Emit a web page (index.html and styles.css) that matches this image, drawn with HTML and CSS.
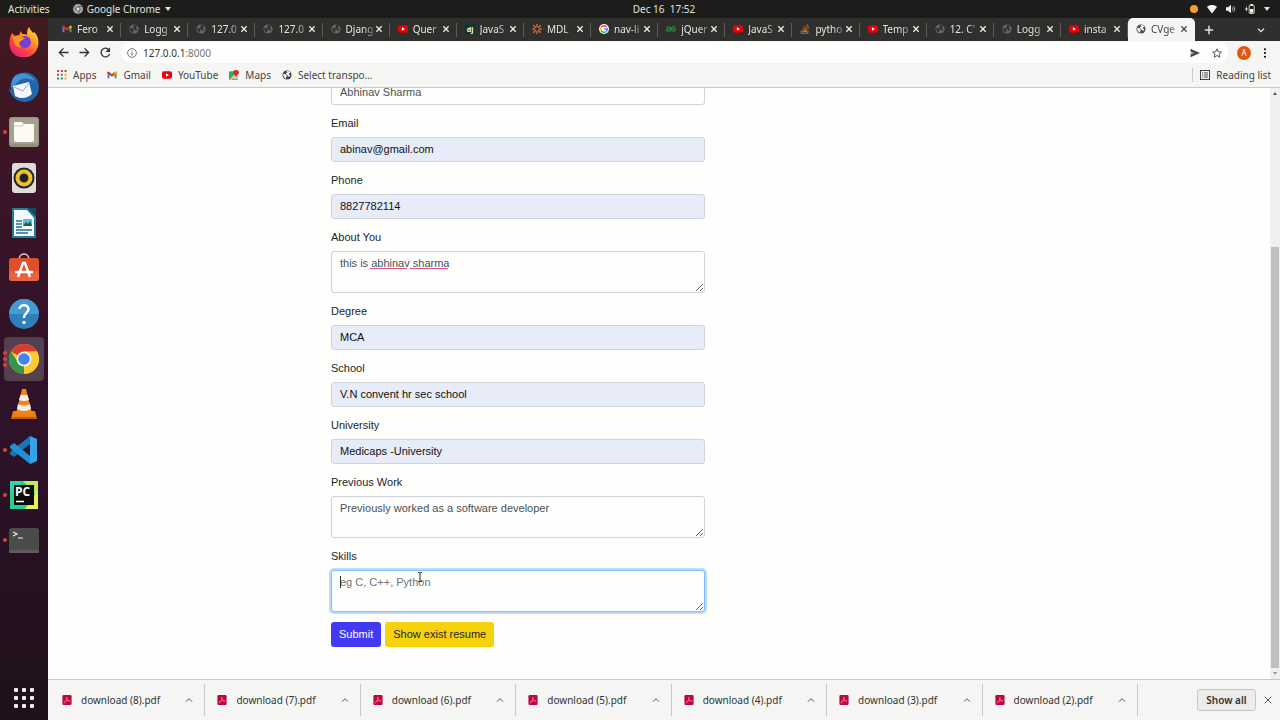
FILE: index.html
```html
<!DOCTYPE html>
<html lang="en">
<head>
    <meta charset="utf-8">
    <title>CVgenerator</title>
    <link rel="stylesheet" href="styles.css">
</head>
<body>
    <!-- Shared icons -->
    <svg class="sprite" aria-hidden="true">
        <symbol id="globe" viewBox="0 0 24 24">
            <circle cx="12" cy="12" r="11" fill="currentColor"/>
            <path d="M3 9l5 1 4 4-2 3v4c-4-1-7-5-7-9zM11 3c3-1 7 0 9 4l-3 1-1 3 4 1-2 4-4-1-1-3-4-2 1-3 3-1z" class="land"/>
        </symbol>
        <symbol id="youtube" viewBox="0 0 24 24">
            <rect x="0" y="3" width="24" height="18" rx="5" fill="#e80008"/>
            <path d="M9.500 8l7 4-7 4z" fill="#fff"/>
        </symbol>
        <symbol id="gmail" viewBox="0 0 24 24">
            <path d="M1 5v15h5V9z" fill="#4285f4"/>
            <path d="M23 5v15h-5V9z" fill="#34a853"/>
            <path d="M1 4h4l7 6 7-6h4v4l-11 8L1 8z" fill="#d93025"/>
            <path d="M18 5l5-1v4l-5 4z" fill="#fbbc04"/>
        </symbol>
        <symbol id="close" viewBox="0 0 24 24">
            <path d="M4 4l16 16M20 4L4 20" stroke="currentColor" stroke-width="4" fill="none"/>
        </symbol>
        <symbol id="up" viewBox="0 0 24 24">
            <path d="M3 17l9-9 9 9" stroke="currentColor" stroke-width="3" fill="none"/>
        </symbol>
        <symbol id="pdf" viewBox="0 0 24 24">
            <rect x="1" y="0" width="22" height="24" rx="3" fill="#c00642"/>
            <path d="M12 5c-2 0 0 6 2 8s5 3 5 1-7-1-11 1-4 4-2 4 6-8 6-14z" fill="none" stroke="#ff86a8" stroke-width="1.500"/>
        </symbol>
    </svg>

    <header class="topbar">
        <button class="topbar-item">Activities</button>
        <button class="topbar-item app-menu">
            <svg class="icon-10" viewBox="0 0 24 24"><circle cx="12" cy="12" r="12" fill="#a9a9a6"/><path d="M12 6h11M7 15L2 6M17 15l-5 9" stroke="#555" stroke-width="2"/><circle cx="12" cy="12" r="5" fill="#ddd" stroke="#555" stroke-width="2"/></svg>
            Google Chrome
            <span class="triangle"></span>
        </button>
        <span class="clock">Dec 16&nbsp; 17:52</span>
        <div class="status">
            <span class="dot"></span>
            <svg class="icon-10" viewBox="0 0 24 24"><path d="M0 7c7-6 17-6 24 0L12 23z" fill="#f2f2f0"/></svg>
            <svg class="icon-10" viewBox="0 0 24 24"><path d="M0 8h5l7-6v20l-7-6H0z" fill="#f2f2f0"/><path d="M15 8c2 2 2 6 0 8M18 5c4 4 4 10 0 14" stroke="#ccc" stroke-width="2" fill="none"/></svg>
            <svg class="icon-10" viewBox="0 0 24 24"><path d="M4 5L0 13h3l-1 7 5-9H4z" fill="#f2f2f0"/><rect x="10" y="3" width="12" height="20" rx="2" fill="none" stroke="#f2f2f0" stroke-width="2"/><path d="M13 0h6v4h-6zM12 12h8v9h-8z" fill="#f2f2f0"/></svg>
            <span class="triangle"></span>
        </div>
    </header>

    <div class="desktop">
        <nav class="dock" aria-label="Dock">
            <ul>
                <li><svg viewBox="0 0 30 30">
                    <defs><linearGradient id="fire" x1="1" y1="0" x2="0.300" y2="1"><stop offset="0" stop-color="#fff04a"/><stop offset="0.400" stop-color="#ff9a20"/><stop offset="0.750" stop-color="#ff4040"/><stop offset="1" stop-color="#e0208a"/></linearGradient></defs>
                    <path d="M3 6l3 3 4-1 2-4 1 3c3 0 4 0 5 1 0-3 0-5 2-8 1 3 3 4 4 6l1-1c5 4 6 13 2 19-6 9-19 8-24 1C-1 19 0 11 3 6z" fill="url(#fire)"/>
                    <circle cx="16" cy="15" r="6" fill="#7a3fd0"/>
                    <path d="M4 10c3-2 6-1 8 0l4 1-4 3c-3 1-2 5 1 6-6 2-9-5-9-10z" fill="#ff9422"/>
                </svg></li>
                <li><svg viewBox="0 0 30 30">
                    <path d="M5 5c5-5 13-6 19-2 6 4 7 12 5 18-2 5-8 9-13 9C8 30 1 24 0 16l2 2c-1-5 0-9 3-13z" fill="#1e67ad"/>
                    <path d="M7 3c8-4 16 0 19 6l-5-2c-5-2-10 0-13 4L2 16C2 11 3 6 7 3z" fill="#3f93d6"/>
                    <path d="M4 14l16-4 3 12c-5 5-12 5-17 2z" fill="#f5f5fa"/>
                    <path d="M5 15l9 4 6-8" fill="none" stroke="#9aa9c4"/>
                </svg></li>
                <li class="running"><svg viewBox="0 0 30 30">
                    <rect width="30" height="30" rx="3" fill="#94907f"/><rect x="1" y="1" width="28" height="26" rx="3" fill="#a5a191"/>
                    <path d="M5 6q0-1 1-1h7l2 2h9q1 0 1 1v15q0 2-2 2H7q-2 0-2-2z" fill="#fbfaf4"/><path d="M5 9h8l2-2" fill="none" stroke="#ccc8b9"/>
                </svg></li>
                <li><svg viewBox="0 0 30 30">
                    <rect x="3" width="24" height="30" rx="3" fill="#dedbd8"/>
                    <circle cx="15" cy="15" r="10.500" fill="#252525"/><circle cx="15" cy="15" r="6.500" fill="none" stroke="#edc033" stroke-width="4"/><circle cx="15" cy="15" r="3" fill="#222"/>
                </svg></li>
                <li><svg viewBox="0 0 30 30">
                    <path d="M4 0h15l8 8v21q0 1-1 1H4q-1 0-1-1V1q0-1 1-1z" fill="#247f9f"/><path d="M5 2h13l7 8v18H5z" fill="#f5fafa"/><path d="M18 0h9v9z" fill="#114a63"/>
                    <path d="M7 13h6M7 16h6M7 19h6M7 22h16M7 25h12" stroke="#23708e" stroke-width="1.500"/><rect x="14" y="11" width="9" height="7" fill="#5abde0"/><path d="M14 18l3-4 2 2 2-3 2 5z" fill="#245e3c"/>
                </svg></li>
                <li><svg viewBox="0 0 30 30">
                    <path d="M10 7c0-8 10-8 10 0" fill="none" stroke="#f0cfc4" stroke-width="1.500"/><rect y="5" width="30" height="23" rx="3" fill="#df5029"/><path d="M0 18h30v7q0 3-3 3H3q-3 0-3-3z" fill="#e9643c"/>
                    <path d="M9 24l5-14h2l5 14M6 19h18" fill="none" stroke="#fff" stroke-width="2.500"/>
                </svg></li>
                <li><svg viewBox="0 0 30 30">
                    <circle cx="15" cy="15" r="15" fill="#2f7fba"/><path d="M0 15a15 15 0 0 1 30 0z" fill="#449bd3"/>
                    <path d="M10.500 10c0-5 9-5 9 0 0 4-4.500 4-4.500 9" fill="none" stroke="#fff" stroke-width="2.500"/><circle cx="15" cy="23.500" r="1.800" fill="#fff"/>
                </svg></li>
                <li class="running many active"><svg viewBox="0 0 30 30">
                    <circle cx="15" cy="15" r="15" fill="#fbc934"/>
                    <path d="M15 15L2 7.500a15 15 0 0 1 26 0H15z" fill="#d93b2f"/><path d="M15 15v15A15 15 0 0 1 2 7.500l7 11z" fill="#35954a"/><path d="M28 7.500A15 15 0 0 1 15 30l6.500-12V7.500z" fill="#fbc934"/>
                    <circle cx="15" cy="15" r="7.500" fill="#f4f4f4"/><circle cx="15" cy="15" r="5.800" fill="#4385e8"/>
                </svg></li>
                <li><svg viewBox="0 0 30 30">
                    <path d="M4 22h22l2 8H2z" fill="#ee7d13"/><path d="M13 0h4l6 24q-8 4-16 0z" fill="#f08519"/>
                    <path d="M11.500 6h7l1.500 5q-5 2-10 0zM9 15q6 3 12 0l1 5q-7 4-14 0z" fill="#f2eee9"/><path d="M2 28h26v2H2z" fill="#c45b08"/>
                </svg></li>
                <li class="running"><svg viewBox="0 0 30 30">
                    <path d="M21 1l7 3v22l-7 3z" fill="#33a5e6"/><path d="M21 1v8L5 22l-4-3v-2z" fill="#1875b5"/><path d="M21 29v-8L5 8l-4 3v2z" fill="#2291d5"/>
                </svg></li>
                <li class="running"><svg viewBox="0 0 30 30">
                    <rect x="1" y="1" width="28" height="28" fill="#27cd8e"/><path d="M14 1h15v16z" fill="#b8ec5c"/><path d="M29 10v19H16z" fill="#e9f05b"/><path d="M1 1h12L1 14z" fill="#32d5a6"/>
                    <rect x="5" y="5" width="20" height="20" fill="#0c0c0c"/>
                    <text x="6" y="16" class="pc-text">PC</text><path d="M7 21.500h8" stroke="#fff" stroke-width="1.500"/>
                </svg></li>
                <li class="running"><svg viewBox="0 0 30 30">
                    <rect y="3" width="30" height="25" rx="3" fill="#4b4c4a"/><rect y="25" width="30" height="3" rx="1" fill="#5c5d5a"/>
                    <path d="M4 7l4 2-4 2M9 13h5" fill="none" stroke="#f0f0f0" stroke-width="1.200"/>
                </svg></li>
            </ul>
            <button class="show-apps" aria-label="Show applications">
                <i></i><i></i><i></i><i></i><i></i><i></i><i></i><i></i><i></i>
            </button>
        </nav>

        <div class="browser">
            <div class="tabstrip">
                <div class="tabs">
                    <div class="tab"><svg><use href="#gmail"/></svg><span>Fero</span><button aria-label="Close"><svg><use href="#close"/></svg></button></div>
                    <div class="tab"><svg><use href="#globe"/></svg><span>Logg</span><button aria-label="Close"><svg><use href="#close"/></svg></button></div>
                    <div class="tab"><svg><use href="#globe"/></svg><span>127.0</span><button aria-label="Close"><svg><use href="#close"/></svg></button></div>
                    <div class="tab"><svg><use href="#globe"/></svg><span>127.0</span><button aria-label="Close"><svg><use href="#close"/></svg></button></div>
                    <div class="tab"><svg><use href="#globe"/></svg><span>Djang</span><button aria-label="Close"><svg><use href="#close"/></svg></button></div>
                    <div class="tab"><svg><use href="#youtube"/></svg><span>Quer</span><button aria-label="Close"><svg><use href="#close"/></svg></button></div>
                    <div class="tab"><svg viewBox="0 0 24 24"><rect width="24" height="24" rx="3" fill="#0b3b2b"/><text x="4" y="18" class="dj-text">dj</text></svg><span>JavaS</span><button aria-label="Close"><svg><use href="#close"/></svg></button></div>
                    <div class="tab"><svg viewBox="0 0 24 24"><path d="M12 0v8M12 16v8M0 12h8M16 12h8M3 3l6 6M15 15l6 6M21 3l-6 6M9 15l-6 6" stroke="#e0782a" stroke-width="3"/></svg><span>MDL</span><button aria-label="Close"><svg><use href="#close"/></svg></button></div>
                    <div class="tab"><svg viewBox="0 0 24 24"><circle cx="12" cy="12" r="12" fill="#fff"/><g fill="none" stroke-width="3.500"><path d="M18 7a8 8 0 0 0-13 1" stroke="#ea4335"/><path d="M5 8a8 8 0 0 0 0 8" stroke="#fbbc05"/><path d="M5 16a8 8 0 0 0 12 2" stroke="#34a853"/><path d="M17 18a8 8 0 0 0 3-6h-8" stroke="#4285f4"/></g></svg><span>nav-li</span><button aria-label="Close"><svg><use href="#close"/></svg></button></div>
                    <div class="tab"><svg viewBox="0 0 24 24"><path d="M2 8c5-4 9 0 9 4H1c0 6 7 7 10 3V8M22 8c-5-4-9 0-9 4h10c0 6-7 7-10 3" fill="none" stroke="#2f8d46" stroke-width="2.500"/></svg><span>jQuer</span><button aria-label="Close"><svg><use href="#close"/></svg></button></div>
                    <div class="tab"><svg><use href="#youtube"/></svg><span>JavaS</span><button aria-label="Close"><svg><use href="#close"/></svg></button></div>
                    <div class="tab"><svg viewBox="0 0 24 24"><path d="M3 15v7h16v-7" fill="none" stroke="#999" stroke-width="2"/><path d="M6 18h10M6 14l10 2M7 9l9 5M11 5l7 7M16 1l5 9" stroke="#e87922" stroke-width="2.200"/></svg><span>pytho</span><button aria-label="Close"><svg><use href="#close"/></svg></button></div>
                    <div class="tab"><svg><use href="#youtube"/></svg><span>Temp</span><button aria-label="Close"><svg><use href="#close"/></svg></button></div>
                    <div class="tab"><svg><use href="#globe"/></svg><span>12. C'</span><button aria-label="Close"><svg><use href="#close"/></svg></button></div>
                    <div class="tab"><svg><use href="#globe"/></svg><span>Logg</span><button aria-label="Close"><svg><use href="#close"/></svg></button></div>
                    <div class="tab"><svg><use href="#youtube"/></svg><span>insta</span><button aria-label="Close"><svg><use href="#close"/></svg></button></div>
                    <div class="tab current"><svg><use href="#globe"/></svg><span>CVge</span><button aria-label="Close"><svg><use href="#close"/></svg></button></div>
                </div>
                <div class="tab-actions">
                    <button aria-label="New tab"><svg class="icon-10" viewBox="0 0 24 24"><path d="M12 2v20M2 12h20" stroke="currentColor" stroke-width="3.500"/></svg></button>
                    <button aria-label="Search tabs"><svg class="icon-8" viewBox="0 0 24 24"><path d="M3 8l9 9 9-9" stroke="currentColor" stroke-width="4" fill="none"/></svg></button>
                </div>
            </div>

            <div class="toolbar">
                <button aria-label="Back"><svg class="icon-11" viewBox="0 0 24 24"><path d="M23 12H3M12 3l-9 9 9 9" stroke="currentColor" stroke-width="3" fill="none"/></svg></button>
                <button aria-label="Forward"><svg class="icon-11" viewBox="0 0 24 24"><path d="M1 12h20M12 3l9 9-9 9" stroke="currentColor" stroke-width="3" fill="none"/></svg></button>
                <button aria-label="Reload"><svg class="icon-11" viewBox="0 0 24 24"><path d="M20 7a9.500 9.500 0 1 0 1 8" stroke="currentColor" stroke-width="3" fill="none"/><path d="M22 1v10H12z" fill="currentColor"/></svg></button>
                <div class="address">
                    <svg class="icon-10" viewBox="0 0 24 24"><circle cx="12" cy="12" r="10.500" fill="none" stroke="#5c5f5e" stroke-width="2"/><path d="M12 10v8M12 6v2" stroke="#5c5f5e" stroke-width="2.500"/></svg>
                    <span class="url">127.0.0.1<em>:8000</em></span>
                    <button aria-label="Share"><svg class="icon-10" viewBox="0 0 24 24"><path d="M1 2l23 10L1 22l1-8 9-2-9-2z" fill="#444746"/></svg></button>
                    <button aria-label="Bookmark"><svg class="icon-10" viewBox="0 0 24 24"><path d="M12 2l3 7 7.500.700-5.700 5 1.800 7.300-6.600-4-6.600 4 1.800-7.300-5.700-5L9 9z" fill="none" stroke="#444746" stroke-width="2.200"/></svg></button>
                </div>
                <button class="avatar" aria-label="Profile">A</button>
                <button class="more" aria-label="Menu"><svg class="icon-10" viewBox="0 0 24 24"><circle cx="12" cy="3" r="2.500"/><circle cx="12" cy="12" r="2.500"/><circle cx="12" cy="21" r="2.500"/></svg></button>
            </div>

            <div class="bookmarks">
                <a href="#"><svg viewBox="0 0 24 24"><path d="M0 0h5v5H0zM9 0h5v5H9zM18 0h5v5h-5zM0 9h5v5H0z" fill="#d8432f"/><path d="M9 9h5v5H9z" fill="#4285f4"/><path d="M18 9h5v5h-5zM18 18h5v5h-5z" fill="#e7ae26"/><path d="M0 18h5v5H0zM9 18h5v5H9z" fill="#2b9750"/></svg>Apps</a>
                <a href="#"><svg><use href="#gmail"/></svg>Gmail</a>
                <a href="#"><svg><use href="#youtube"/></svg>YouTube</a>
                <a href="#"><svg viewBox="0 0 24 24"><rect x="0" y="3" width="21" height="21" rx="3" fill="#38a853"/><path d="M2 22L18 5l3 3v14z" fill="#b9cfe8"/><path d="M2 24L13 12l3 3-10 9z" fill="#f2c445"/><path d="M17 0c8 0 9 8 4 11l-4 6-4-6c-5-3-4-11 4-11z" fill="#cf2d2b"/></svg>Maps</a>
                <a href="#"><svg><use href="#globe"/></svg>Select transpo…</a>
                <a href="#" class="reading"><svg viewBox="0 0 24 24"><rect x="1" y="1" width="22" height="22" fill="none" stroke="#333" stroke-width="2.500"/><path d="M5 7h3M10 7h9M5 12h3M10 12h9M5 17h3M10 17h9" stroke="#333" stroke-width="2.200"/></svg>Reading list</a>
            </div>

            <div class="viewport">
                <main class="page">
                    <div class="container">
                        <form class="cv-form">
                            <input type="text" value="Abhinav Sharma" aria-label="Name">

                            <label for="email">Email</label>
                            <input type="text" id="email" class="filled" value="abinav@gmail.com">

                            <label for="phone">Phone</label>
                            <input type="text" id="phone" class="filled" value="8827782114">

                            <label for="about">About You</label>
                            <div class="field">
                                <textarea id="about" spellcheck="false">this is abhinav sharma</textarea>
                                <span class="misspelt first-word"></span>
                                <span class="misspelt second-word"></span>
                            </div>

                            <label for="degree">Degree</label>
                            <input type="text" id="degree" class="filled" value="MCA">

                            <label for="school">School</label>
                            <input type="text" id="school" class="filled" value="V.N convent hr sec school">

                            <label for="university">University</label>
                            <input type="text" id="university" class="filled" value="Medicaps -University">

                            <label for="work">Previous Work</label>
                            <textarea id="work" spellcheck="false">Previously worked as a software developer</textarea>

                            <label for="skills">Skills</label>
                            <div class="field">
                                <textarea id="skills" class="focused" placeholder="eg C, C++, Python"></textarea>
                                <span class="caret"></span>
                                <svg class="pointer" viewBox="0 0 6 10"><path d="M1 .500h1.500l.500.500.500-.500H5M3 1v8M1 9.500h1.500l.500-.500.500.500H5" fill="none" stroke="#333"/></svg>
                            </div>

                            <div class="buttons">
                                <button type="button" class="btn btn-primary">Submit</button>
                                <button type="button" class="btn btn-warning">Show exist resume</button>
                            </div>
                        </form>
                    </div>
                </main>
                <div class="scrollbar">
                    <span class="arrow arrow-up"></span>
                    <div class="track"><div class="thumb"></div></div>
                    <span class="arrow arrow-down"></span>
                </div>
            </div>

            <footer class="downloads">
                <div class="files">
                    <div class="file"><svg><use href="#pdf"/></svg><span>download (8).pdf</span><button aria-label="Options"><svg><use href="#up"/></svg></button></div>
                    <div class="file"><svg><use href="#pdf"/></svg><span>download (7).pdf</span><button aria-label="Options"><svg><use href="#up"/></svg></button></div>
                    <div class="file"><svg><use href="#pdf"/></svg><span>download (6).pdf</span><button aria-label="Options"><svg><use href="#up"/></svg></button></div>
                    <div class="file"><svg><use href="#pdf"/></svg><span>download (5).pdf</span><button aria-label="Options"><svg><use href="#up"/></svg></button></div>
                    <div class="file"><svg><use href="#pdf"/></svg><span>download (4).pdf</span><button aria-label="Options"><svg><use href="#up"/></svg></button></div>
                    <div class="file"><svg><use href="#pdf"/></svg><span>download (3).pdf</span><button aria-label="Options"><svg><use href="#up"/></svg></button></div>
                    <div class="file"><svg><use href="#pdf"/></svg><span>download (2).pdf</span><button aria-label="Options"><svg><use href="#up"/></svg></button></div>
                </div>
                <div class="download-actions">
                    <button class="show-all">Show all</button>
                    <button aria-label="Close"><svg class="icon-8" viewBox="0 0 24 24"><path d="M2 2l20 20M22 2L2 22" stroke="#555" stroke-width="3"/></svg></button>
                </div>
            </footer>
        </div>
    </div>
</body>
</html>
```
FILE: styles.css
```css
* {
    box-sizing: border-box;
}

body {
    display: flex;
    flex-direction: column;
    height: 100vh;
    margin: 0;
    overflow: hidden;
    font-family: 'Noto Sans', sans-serif;
    font-size: 10px;
    line-height: 14px;
    color: #333;
}

button {
    display: flex;
    align-items: center;
    justify-content: center;
    padding: 0;
    border: 0;
    background: none;
    font: inherit;
    color: inherit;
}

svg {
    display: block;
    flex: none;
}

.sprite {
    position: absolute;
    width: 0;
    height: 0;
}

.icon-8 {
    width: 8px;
    height: 8px;
}

.icon-10 {
    width: 10px;
    height: 10px;
}

.icon-11 {
    width: 11px;
    height: 11px;
}

.land {
    fill: var(--land, #f5f6f4);
}

/* Top bar */
.topbar {
    display: grid;
    grid-template-columns: auto auto 1fr;
    align-items: center;
    position: relative;
    height: 18px;
    flex: none;
    padding: 0 10px 0 8px;
    background: #1c1d1a;
    color: #e2e2df;
}

.app-menu {
    gap: 4px;
    margin-left: 23px;
}

.triangle {
    border: 3px solid transparent;
    border-top: 4px solid currentColor;
    border-bottom: 0;
}

.clock {
    position: absolute;
    left: 50%;
    transform: translateX(-50%);
    margin-left: 24px;
}

.status {
    display: flex;
    align-items: center;
    justify-content: flex-end;
    gap: 9px;
}

.dot {
    width: 8px;
    height: 8px;
    border-radius: 50%;
    background: #f0a02c;
}

.desktop {
    display: flex;
    flex: 1;
    min-height: 0;
}

/* Dock */
.dock {
    display: flex;
    flex-direction: column;
    justify-content: space-between;
    align-items: center;
    flex: none;
    width: 48px;
    padding: 1px 0 12px;
    background: linear-gradient(#43191f, #3a1428 25%, #2d1229 60%, #1e1119);
}

.dock ul {
    display: flex;
    flex-direction: column;
    width: 100%;
    height: 544px;
    margin: 0;
    padding: 0 3px;
    list-style: none;
}

.dock li {
    display: flex;
    align-items: center;
    justify-content: center;
    position: relative;
    flex: 1;
    border: 1px solid transparent;
    border-radius: 5px;
    background-clip: padding-box;
}

.dock li svg {
    width: 30px;
    height: 30px;
}

.dock .active {
    background-color: #55404f;
}

.running::before {
    content: '';
    position: absolute;
    left: -1px;
    width: 4px;
    height: 4px;
    border-radius: 50%;
    background: #d5492b;
}

.many::before {
    box-shadow: 0 -6px #d5492b, 0 6px #d5492b;
}

.pc-text {
    font: bold 12px 'Open Sans', sans-serif;
    fill: #fff;
}

.dj-text {
    font: bold 17px 'Open Sans', sans-serif;
    fill: #fff;
}

.show-apps {
    display: grid;
    grid-template-columns: repeat(3, 4px);
    gap: 4px;
}

.show-apps i {
    height: 4px;
    border-radius: 1px;
    background: #f1eef0;
}

.browser {
    display: flex;
    flex-direction: column;
    flex: 1;
    min-width: 0;
    background: #f5f6f4;
}

/* Tabs */
.tabstrip {
    display: flex;
    height: 23px;
    padding-left: 6px;
    background: #2f2f2d;
    color: #e4e4e1;
}

.tabs {
    display: flex;
    flex: 1;
    min-width: 0;
}

.tab {
    --land: #2f2f2d;
    display: flex;
    align-items: center;
    flex: 1;
    min-width: 0;
    padding: 0 7px 1px 8px;
    background: linear-gradient(#5a5a57, #5a5a57) right center / 1px 14px no-repeat;
}

.tab svg {
    width: 10px;
    height: 10px;
    color: #686966;
}

.tab span {
    flex: 1;
    min-width: 0;
    margin-left: 5px;
    white-space: nowrap;
    mask-image: linear-gradient(90deg, #000 60%, rgba(0, 0, 0, 0.2));
}

.tab button svg {
    width: 8px;
    height: 8px;
    color: #e9e9e6;
}

.tab.current {
    --land: #f5f6f4;
    border-radius: 5px 5px 0 0;
    background: #f5f6f4;
    color: #444;
}

.tab.current svg {
    color: #4c4e50;
}

.tab-actions {
    display: flex;
    justify-content: space-between;
    width: 85px;
    padding: 0 15px 0 9px;
}

/* Toolbar */
.toolbar {
    display: flex;
    align-items: center;
    height: 23px;
    padding: 0 10px;
}

.toolbar > button {
    width: 11px;
    margin-right: 10px;
}

.address {
    display: flex;
    align-items: center;
    flex: 1;
    height: 21px;
    padding: 0 6px;
    border-radius: 10px;
    background: #fefefc;
}

.address button {
    margin-left: 12px;
}

.url {
    flex: 1;
    margin-left: 6px;
}

.url em {
    font-style: normal;
    color: #777;
}

.toolbar .avatar {
    width: 14px;
    height: 14px;
    margin: 0 9px;
    border-radius: 50%;
    background: #e2570e;
    color: #fff;
    font-size: 8px;
}

.toolbar .more {
    width: 10px;
    margin: 0;
}

.bookmarks {
    display: flex;
    align-items: center;
    gap: 11px;
    height: 24px;
    padding: 0 9px 1px;
    border-bottom: 1px solid #c9cac8;
}

.bookmarks a {
    display: flex;
    align-items: center;
    gap: 6px;
    color: #444;
    text-decoration: none;
}

.bookmarks svg {
    width: 10px;
    height: 10px;
}

.bookmarks .reading {
    margin-left: auto;
    padding-left: 7px;
    border-left: 1px solid #ccc;
}

/* Page */
.viewport {
    display: flex;
    flex: 1;
    min-height: 0;
    background: #fefefc;
}

.page {
    flex: 1;
    overflow: hidden;
}

.container {
    max-width: 760px;
    margin: 0 auto;
    padding: 0 52px;
}

.cv-form {
    max-width: 374px;
    margin-top: -8px;
    font-family: 'Liberation Sans', Arial, sans-serif;
    font-size: 11px;
    line-height: 16px;
    color: #212529;
}

.cv-form label {
    display: block;
    margin-bottom: 6px;
}

.cv-form input,
.cv-form textarea {
    display: block;
    width: 100%;
    height: 25px;
    margin: 0 0 10px;
    padding: 3px 8px 5px;
    border: 1px solid #ced4da;
    border-radius: 3px;
    background: #fefefc;
    font: inherit;
    color: #495057;
}

.cv-form textarea {
    height: 42px;
    overflow: hidden;
}

.cv-form .filled {
    background: #e8ecf8;
    color: #111;
}

.cv-form .focused {
    border-color: #80bdff;
    box-shadow: 0 0 0 2px #bfdcfa;
    outline: 0;
}

.focused::placeholder {
    color: #6c757d;
}

.field {
    position: relative;
}

.misspelt {
    position: absolute;
    top: 17px;
    height: 1px;
    background: #d0568c;
}

.first-word {
    left: 39px;
    width: 37px;
}

.second-word {
    left: 79px;
    width: 38px;
}

.caret {
    position: absolute;
    top: 6px;
    left: 9px;
    width: 1px;
    height: 12px;
    background: #333;
}

.pointer {
    position: absolute;
    top: 2px;
    left: 86px;
    width: 6px;
    height: 10px;
}

.buttons {
    display: flex;
    gap: 4px;
}

.btn {
    height: 25px;
    padding: 0 8px 1px;
    border-radius: 3px;
}

.btn-primary {
    background: #4339f2;
    color: #fff;
}

.btn-warning {
    background: #f7d20b;
    color: #212529;
}

.scrollbar {
    display: flex;
    flex-direction: column;
    align-items: center;
    width: 10px;
    background: #f0f0ef;
}

.track {
    display: flex;
    flex-direction: column;
    justify-content: flex-end;
    flex: 1;
}

.thumb {
    width: 8px;
    height: 74%;
    background: #bfbfbe;
}

.arrow {
    margin: 4px 0;
    border: 2px solid transparent;
}

.arrow-up {
    border-top: 0;
    border-bottom: 3px solid #555;
}

.arrow-down {
    border-bottom: 0;
    border-top: 3px solid #999;
}

/* Downloads */
.downloads {
    display: flex;
    align-items: center;
    height: 41px;
    padding-left: 2px;
    border-top: 1px solid #c9cac8;
}

.files {
    display: flex;
    flex: 1;
}

.file {
    display: flex;
    align-items: center;
    flex: 1;
    height: 32px;
    padding: 0 11px 0 12px;
    border-right: 1px solid #c9cac8;
}

.file svg {
    width: 10px;
    height: 10px;
}

.file span {
    flex: 1;
    margin-left: 9px;
}

.file button svg {
    width: 8px;
    height: 8px;
    color: #555;
}

.download-actions {
    display: flex;
    align-items: center;
    justify-content: flex-end;
    gap: 8px;
    width: 142px;
    padding-right: 8px;
}

.show-all {
    width: 59px;
    height: 22px;
    border: 1px solid #c6c7c5;
    border-radius: 3px;
    background: #ececea;
    font-weight: 600;
}
```
